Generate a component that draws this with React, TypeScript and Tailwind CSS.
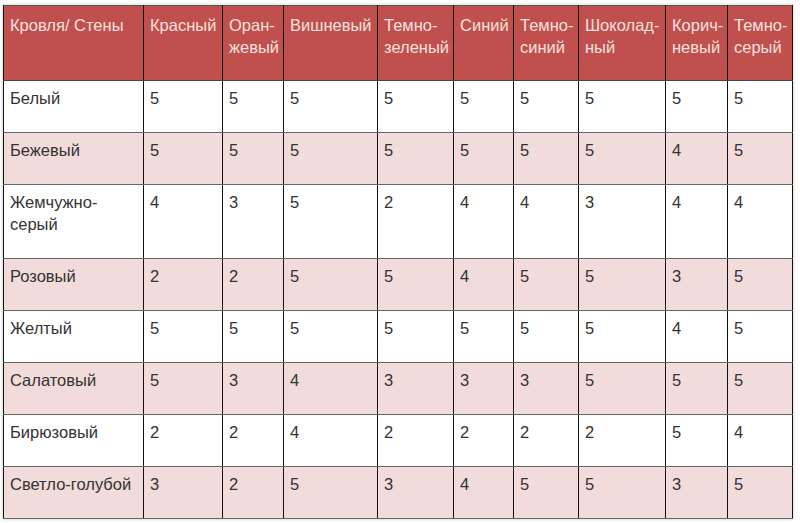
const headers = [
  ["Кровля/ Стены"],
  ["Красный"],
  ["Оран-", "жевый"],
  ["Вишневый"],
  ["Темно-", "зеленый"],
  ["Синий"],
  ["Темно-", "синий"],
  ["Шоколад-", "ный"],
  ["Корич-", "невый"],
  ["Темно-", "серый"],
];

const widths = [140, 79, 61, 94, 76, 60, 65, 87, 62, 65];

const rows: { name: string[]; values: number[] }[] = [
  { name: ["Белый"], values: [5, 5, 5, 5, 5, 5, 5, 5, 5] },
  { name: ["Бежевый"], values: [5, 5, 5, 5, 5, 5, 5, 4, 5] },
  { name: ["Жемчужно-", "серый"], values: [4, 3, 5, 2, 4, 4, 3, 4, 4] },
  { name: ["Розовый"], values: [2, 2, 5, 5, 4, 5, 5, 3, 5] },
  { name: ["Желтый"], values: [5, 5, 5, 5, 5, 5, 5, 4, 5] },
  { name: ["Салатовый"], values: [5, 3, 4, 3, 3, 3, 5, 5, 5] },
  { name: ["Бирюзовый"], values: [2, 2, 4, 2, 2, 2, 2, 5, 4] },
  { name: ["Светло-голубой"], values: [3, 2, 5, 3, 4, 5, 5, 3, 5] },
];

function Lines({ parts }: { parts: string[] }) {
  return (
    <>
      {parts.map((p, i) => (
        <span key={i} className="block whitespace-nowrap">
          {p}
        </span>
      ))}
    </>
  );
}

export default function App() {
  return (
    <div className="min-h-[523px] w-[800px] bg-white pl-[3px] pt-[5px] font-['Liberation_Sans',Arial,sans-serif] text-[16.5px] leading-[22px]">
      <table className="w-[789px] table-fixed border-collapse border border-[#555] shadow-[0_0_2px_1px_rgba(0,0,0,0.12)]">
        <colgroup>
          {widths.map((w, i) => (
            <col key={i} style={{ width: w }} />
          ))}
        </colgroup>
        <thead>
          <tr className="bg-[#c0504d] text-[#f6e0df]">
            {headers.map((h, i) => (
              <th
                key={i}
                className="h-[75px] border-x border-x-[#111] border-b border-b-[#444] px-[6px] pt-[8px] pb-[21px] text-left align-top font-normal"
              >
                <Lines parts={h} />
              </th>
            ))}
          </tr>
        </thead>
        <tbody>
          {rows.map((r, ri) => (
            <tr
              key={ri}
              className={ri % 2 === 1 ? "bg-[#f2dcdb] text-[#333]" : "bg-white text-[#333]"}
            >
              <td className="border-x border-x-[#111] border-y border-y-[#666] px-[6px] pt-[6px] pb-[23px] align-top">
                <Lines parts={r.name} />
              </td>
              {r.values.map((v, vi) => (
                <td
                  key={vi}
                  className="border-x border-x-[#111] border-y border-y-[#666] px-[6px] pt-[6px] pb-[23px] align-top"
                >
                  {v}
                </td>
              ))}
            </tr>
          ))}
        </tbody>
      </table>
    </div>
  );
}
